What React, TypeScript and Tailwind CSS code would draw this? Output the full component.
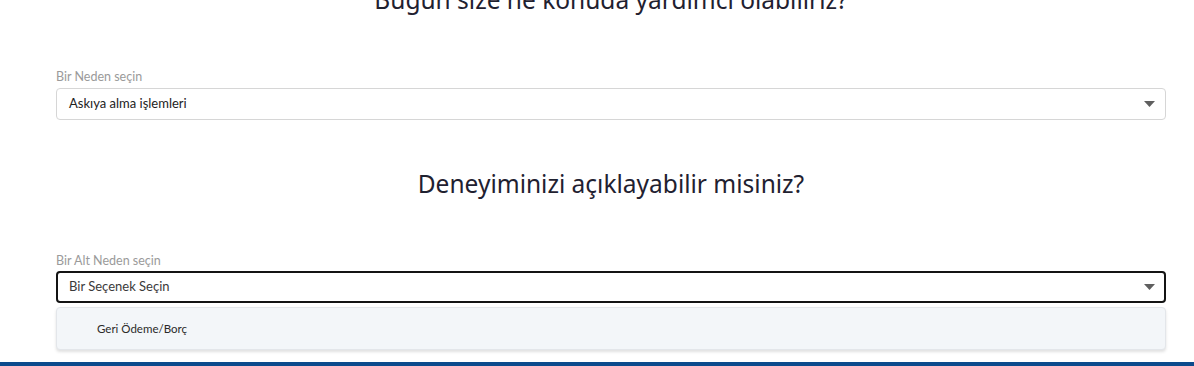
import React from "react";

const Arrow = () => (
  <svg width="11" height="6" viewBox="0 0 11 6" className="shrink-0">
    <path d="M0 0 L11 0 L5.5 6 Z" fill="#5f5f5f" />
  </svg>
);

export default function App() {
  return (
    <div className="w-[1194px] h-[366px] overflow-hidden bg-white relative">
      <div className="pl-[56px] pr-[28px] mt-[-15px] flex flex-col">
        <h1 className="text-center text-[24.5px] leading-[30px] text-[#1f2130] font-['Noto_Sans',sans-serif]">
          Bugün size ne konuda yardımcı olabiliriz?
        </h1>
        <label className="mt-[54px] mb-[3px] text-[12.5px] leading-[16px] text-[#9a9a9a] font-['Lato',sans-serif]">
          Bir Neden seçin
        </label>
        <div className="h-[32px] border border-[#d6d6d6] rounded-[4px] flex items-center justify-between pl-[12px] pr-[10px] font-['Lato',sans-serif] text-[13px] text-[#222]">
          <span>Askıya alma işlemleri</span>
          <Arrow />
        </div>
        <h2 className="mt-[49px] text-center text-[24.5px] leading-[30px] text-[#1f2130] font-['Noto_Sans',sans-serif]">
          Deneyiminizi açıklayabilir misiniz?
        </h2>
        <label className="mt-[54px] mb-[2px] text-[12.5px] leading-[16px] text-[#9a9a9a] font-['Lato',sans-serif]">
          Bir Alt Neden seçin
        </label>
        <div className="h-[32px] border-2 border-[#141414] rounded-[4px] flex items-center justify-between pl-[11px] pr-[9px] font-['Lato',sans-serif] text-[13px] text-[#3a3a3a]">
          <span>Bir Seçenek Seçin</span>
          <Arrow />
        </div>
        <div className="mt-[4px] h-[43px] bg-[#f3f6f9] border border-[#e3e6ea] rounded-[4px] shadow-[0_2px_3px_rgba(0,0,0,0.12)] flex items-center pl-[40px] font-['Lato',sans-serif] text-[11.5px] text-[#2a2a2a]">
          Geri Ödeme/Borç
        </div>
      </div>
      <div className="absolute left-0 right-0 top-[362px] h-[4px] bg-[#0b4a8c]" />
    </div>
  );
}
